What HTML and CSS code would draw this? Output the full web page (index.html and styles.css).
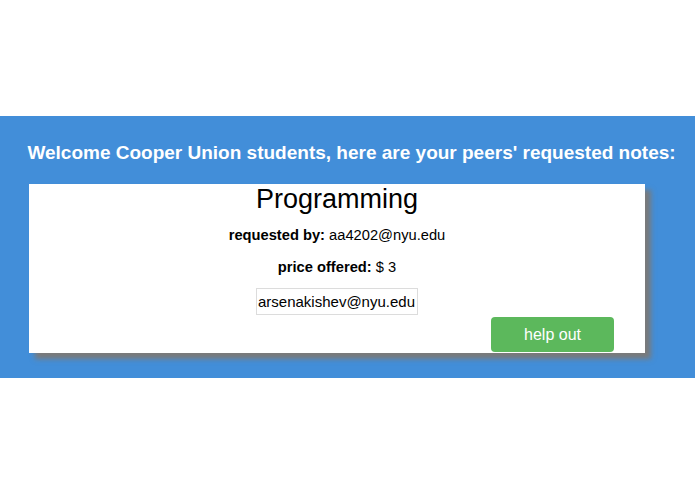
FILE: index.html
```html
<!DOCTYPE html>
<html lang="en">
<head>
  <meta charset="UTF-8">
  <meta name="viewport" content="width=device-width, initial-scale=1.0">
  <title>Cooper Union Notes</title>
  <link rel="stylesheet" href="styles.css">
</head>
<body>
  <!-- Faixa azul com os pedidos -->
  <div class="faixa">
    <h2 class="boas-vindas">Welcome Cooper Union students, here are your peers' requested notes:</h2>

    <div class="cartao">
      <h1>Programming</h1>
      <p class="linha"><strong>requested by:</strong> aa4202@nyu.edu</p>
      <p class="linha preco"><strong>price offered:</strong> $ 3</p>
      <input type="text" class="email" value="arsenakishev@nyu.edu">
      <button class="ajudar">help out</button>
    </div>
  </div>
</body>
</html>
```

FILE: styles.css
```css
* {
  margin: 0;
  padding: 0;
  box-sizing: border-box;
}

body {
  font-family: 'Liberation Sans', Helvetica, Arial, sans-serif;
  background-color: #fff;
  color: #000;
}

.faixa {
  margin-top: 116px;
  background-color: #428ed9;
  padding: 26px 0 25px;
}

.boas-vindas {
  color: #fff;
  font-size: 19px;
  line-height: 22px;
  font-weight: bold;
  text-align: center;
  padding-left: 8px;
  margin-bottom: 20px;
}

.cartao {
  background-color: #fff;
  margin-left: 29px;
  width: 616px;
  height: 169px;
  box-shadow: 6px 6px 5px #7a7a7a;
  display: flex;
  flex-direction: column;
  align-items: center;
}

h1 {
  font-size: 27px;
  line-height: 30px;
  font-weight: normal;
}

.linha {
  font-size: 14.7px;
  line-height: 16px;
  margin-top: 13px;
}

.preco {
  margin-top: 16px;
}

.email {
  margin-top: 13px;
  width: 162px;
  height: 27px;
  padding: 0 1px;
  border: 1px solid #dcdcdc;
  font-family: inherit;
  font-size: 15px;
  color: #000;
}

.ajudar {
  align-self: flex-end;
  margin: 2px 31px 0 0;
  width: 123px;
  height: 35px;
  background-color: #5cb85c;
  color: #fff;
  border: none;
  border-radius: 4px;
  font-family: inherit;
  font-size: 16px;
  cursor: pointer;
}
```
